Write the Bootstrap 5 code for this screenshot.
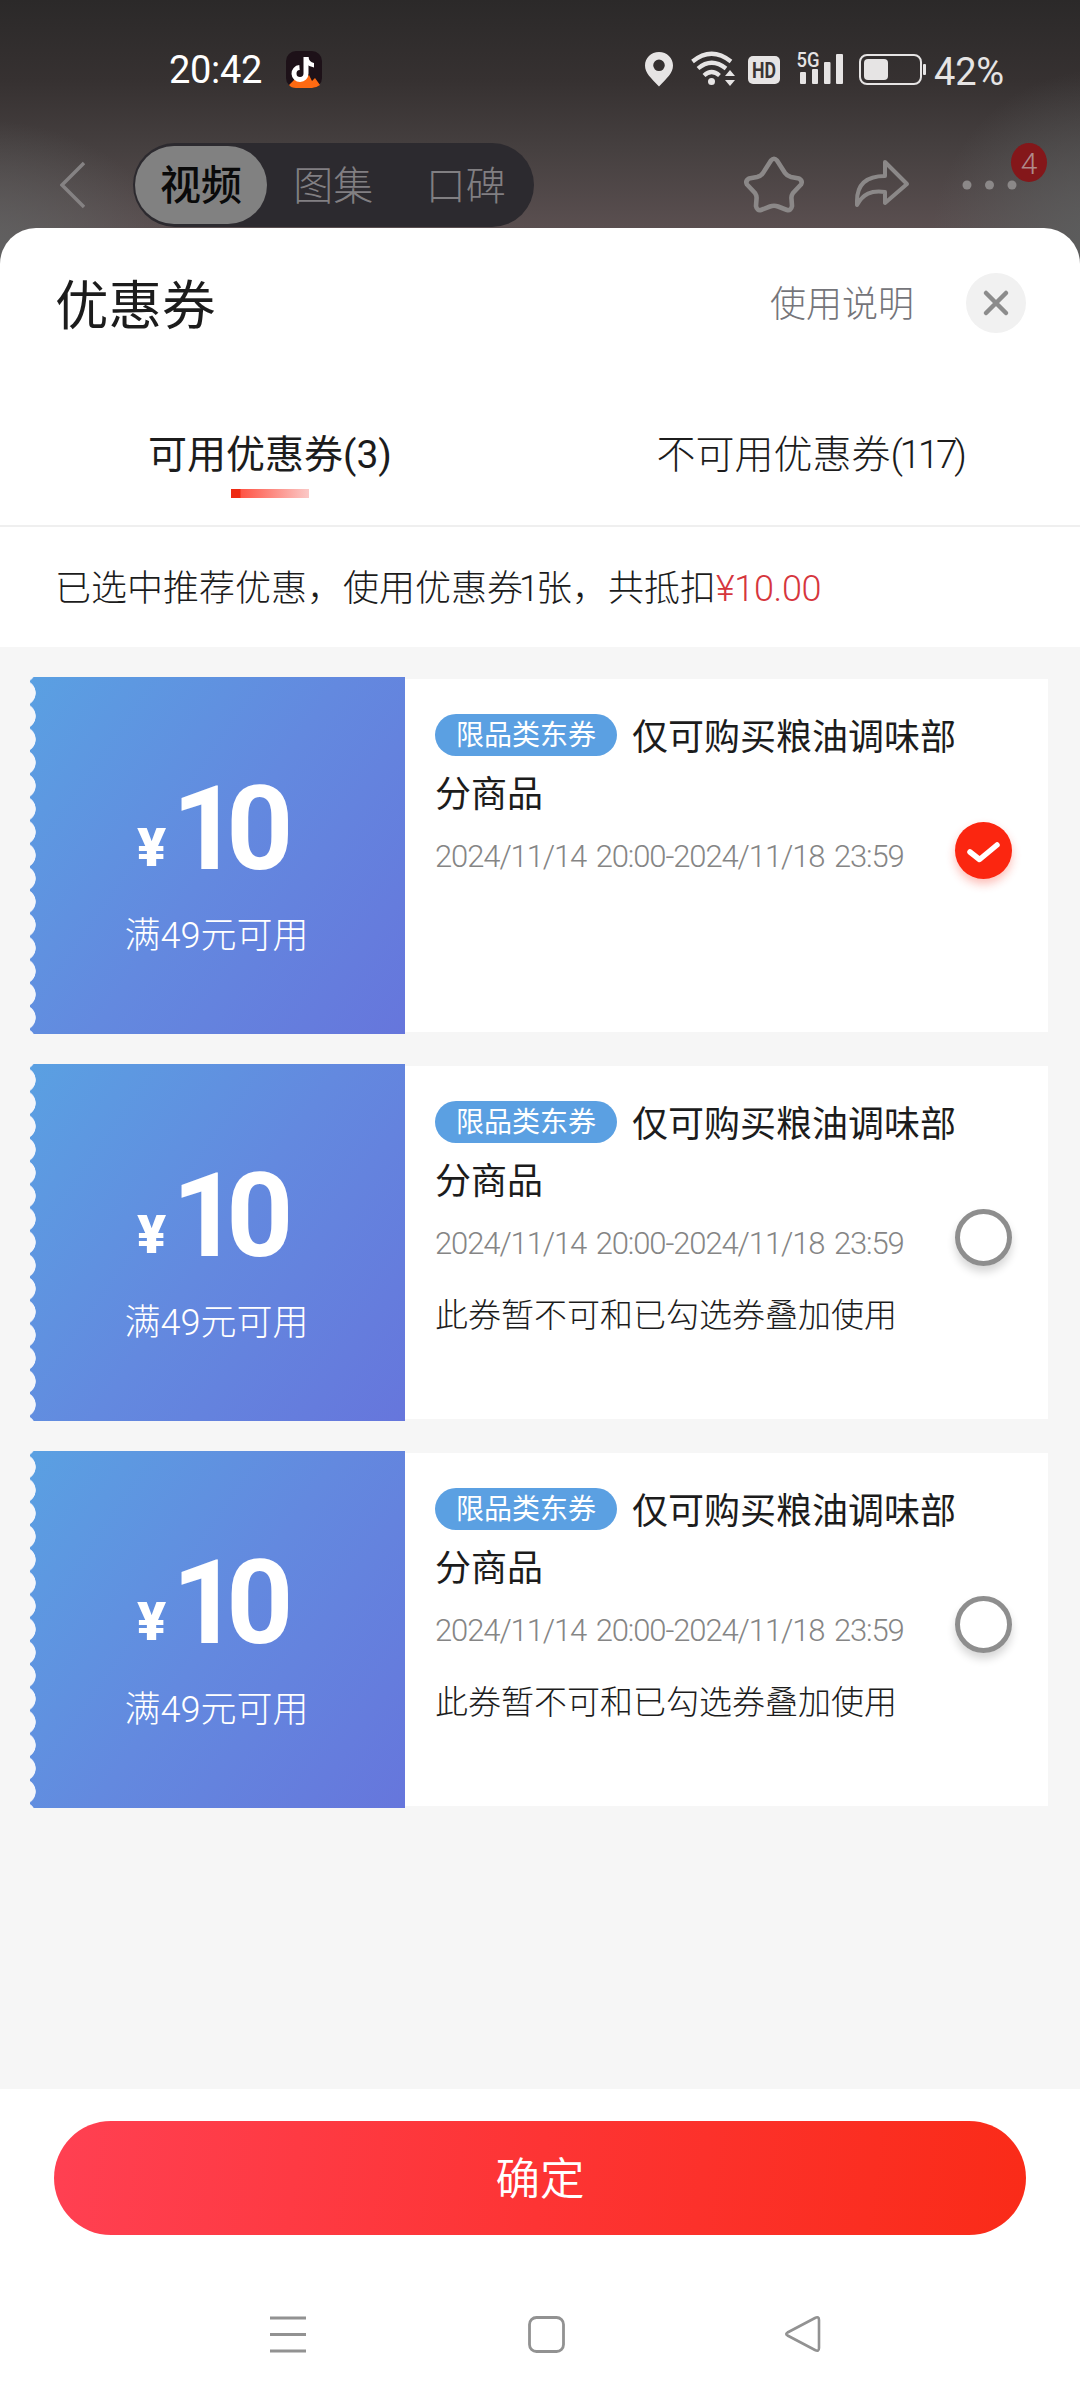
<!DOCTYPE html>
<html lang="zh-CN">
<head>
<meta charset="utf-8">
<meta name="viewport" content="width=device-width, initial-scale=1">
<title>优惠券</title>
<link rel="stylesheet" href="https://cdn.jsdelivr.net/npm/bootstrap@5.3.0/dist/css/bootstrap.min.css">
<style>
body{width:1080px;height:2400px;overflow:hidden;font-family:Roboto,"Noto Sans CJK SC",sans-serif;font-weight:300;color:#1c1c1c;
 background:radial-gradient(ellipse 200px 150px at -20px 270px,#626464,transparent),radial-gradient(ellipse 170px 180px at 1100px 250px,#5c5e5e,transparent),linear-gradient(#2b2929 0,#363131 80px,#464040 150px,#5a4f50 228px);}
svg{display:block;flex:none}
.statusbar{height:137px;color:#fff}
.status-left{padding:49px 0 0 169px;gap:24px}
.status-right{padding:46px 74px 0 0;color:#e6e4e4}
.clock{font-size:38px;line-height:42px;font-weight:400;width:93px;letter-spacing:-.3px}
.pct{font-size:38px;line-height:44px;font-weight:400;letter-spacing:-.2px;margin-left:7px;margin-top:4px;width:72px}
.topbar{height:91px;padding:6px 30px 0 60px;color:#8a8787}
.segment{width:401px;height:84px;background:#2c2a2f;font-size:40px;margin-left:48px;padding:3px 2px}
.segment div{line-height:81px;height:78px;text-align:center;color:#817f82}
.segment .on{width:132px;background:#818181;color:#0a0a0a;font-size:41px;font-weight:500}
.sheet{height:2172px;border-radius:36px 36px 0 0;background:#fff;overflow:hidden}
.sheet-head{height:149px;padding:0 54px 0 55px}
.sheet-title{font-size:53.500px;line-height:80px;font-weight:400;padding-top:9px}
.help{font-size:36px;color:#75757a;margin-right:52px;padding-top:5px}
.close-btn{width:60px;height:60px;background:#f1f1f1;border-radius:50%}
.tabs{height:150px;border-bottom:2px solid #efefef;font-size:39px}
.tab-item{padding-top:50px;line-height:57px}
.tab-item.on{font-weight:400}
.tight{letter-spacing:-3.400px}
.bar{width:78px;height:9px;margin:5px auto 0;background:linear-gradient(90deg,#ee2a12 9px,#ff5546 10px,#fbc9c7)}
.summary{height:120px;font-size:36px;line-height:125px;padding-left:55px}
.slim{letter-spacing:-3px;margin-left:-4px}
.red{color:#d6363d;letter-spacing:-.3px}
.list{height:1442px;background:#f6f6f6;padding:30px 32px 0 30px}
.coupon{height:357px;margin-bottom:30px}
.face{width:375px;height:357px;color:#fff;background:radial-gradient(circle 13px at -7px 11.6px,#f5f6fa 12.4px,transparent 13px) 0 4.4px/20px 23.2px repeat-y,linear-gradient(125deg,#5aa0e2,#6389df 50%,#6676dc)}
.amount{padding-top:3px;margin-top:99px;height:102px;padding-left:107px;font-weight:700}
.yen{font-size:54px;line-height:60px;width:35px;font-weight:900}
.one{font-size:117px;line-height:97px;letter-spacing:-13px;font-weight:700}
.need{font-size:36px;line-height:54px;text-align:center;margin-top:31px;padding-right:2px}
.info{margin:2px 0;background:#fff;padding:30px 36px 0 30px}
.txt{width:480px}
.desc{font-size:36px;line-height:57px;font-weight:400;white-space:nowrap;padding-top:1px}
.tagpill{display:inline-block;height:42px;line-height:44px;width:182px;text-align:center;border-radius:21px;background:#5ba0e2;color:#fff;font-size:28px;vertical-align:5px;margin-right:15px}
.date{font-size:31px;line-height:40px;color:#858585;margin-top:13px;white-space:nowrap;letter-spacing:-1.1px;word-spacing:3px}
.note{font-size:33px;line-height:50px;margin-top:27px;white-space:nowrap}
.pick{width:57px;height:57px;border-radius:50%;margin-top:113px}
.pick.yes{background:#fb2610;box-shadow:0 5px 10px rgba(250,40,20,.3)}
.pick.no{border:5px solid #8e8e8e;box-shadow:0 6px 9px rgba(0,0,0,.16)}
.foot{padding:32px 54px 0}
.ok{height:114px;line-height:119px;font-size:44.500px;color:#fff;background:linear-gradient(97deg,#ff4052,#fd3434 50%,#fa2b18);border:0;padding:0;font-weight:350;width:972px}
.ok:hover{color:#fff}
.sysnav{padding:80px 258px 0 269px}
</style>
</head>
<body>
<header class="statusbar d-flex justify-content-between align-items-start">
 <div class="status-left d-flex align-items-start">
  <div class="clock">20:42</div>
  <svg width="36" height="37" viewBox="0 0 36 37" style="margin-top:2px"><rect width="36" height="37" rx="10" fill="#1d1118"/><path d="M3 34L10 27L16 30L23 24L26 30L29 27L34 34Q30 37 26 37H10Q5 37 3 34Z" fill="#ff6a12"/><path d="M20 6V22.500A6 6 0 1 1 13.500 16.500" fill="none" stroke="#fff" stroke-width="5"/><path d="M18 6H22.300Q23 11 28 12V16.500Q24 16 20 13Z" fill="#fff"/></svg>
 </div>
 <div class="status-right d-flex align-items-start">
  <svg width="284" height="42" viewBox="0 -4 284 42" fill="#e6e4e4">
   <path fill-rule="evenodd" d="M16 2C8 2 2 8 2 15.500C2 23 8 28 16 36.500C24 28 30 23 30 15.500C30 8 24 2 16 2ZM16 9.500A5.800 5.800 0 1 1 16 21.100A5.800 5.800 0 1 1 16 9.500Z"/>
   <g fill="none" stroke="#e6e4e4" stroke-width="4.200"><path d="M49.500 11.500Q68.500 -4 88 11.500"/><path d="M55 18.500Q68.500 7 83 18.500"/><path d="M61 25.500Q68.500 18.500 76.500 25.500"/></g>
   <circle cx="68.500" cy="31.500" r="3.500"/><path d="M82 26L87 20L92 26ZM82 30H92L87 36Z"/>
   <rect x="105" y="6" width="32" height="28" rx="5"/><text x="109" y="28" font-family="Roboto" font-size="22" font-weight="700" textLength="24" lengthAdjust="spacingAndGlyphs" fill="#393433">HD</text>
   <text x="153.500" y="17" font-family="Roboto" font-size="20" font-weight="500" textLength="23" lengthAdjust="spacingAndGlyphs">5G</text>
   <rect x="157" y="22" width="6" height="12" rx="1"/><rect x="169" y="19" width="6" height="15" rx="1"/><rect x="181" y="12" width="6.500" height="22" rx="1"/><rect x="193" y="4" width="7" height="30" rx="1"/>
   <rect x="217" y="5" width="61" height="29" rx="7" fill="none" stroke="#e6e4e4" stroke-width="2"/><rect x="221" y="9" width="24" height="21" rx="4"/><rect x="280" y="14" width="3" height="11" rx="1"/>
  </svg>
  <div class="pct">42%</div>
 </div>
</header>
<nav class="topbar d-flex align-items-start justify-content-between">
 <div class="d-flex align-items-start">
  <svg width="25" height="84" viewBox="0 0 25 84" fill="none" stroke="#858283" stroke-width="3.500"><path d="M24 20L2 42L24 64"/></svg>
  <div class="segment rounded-pill d-flex"><div class="on rounded-pill">视频</div><div class="flex-fill">图集</div><div class="flex-fill">口碑</div></div>
 </div>
 <svg width="310" height="84" viewBox="740 143 310 84" fill="none" stroke="#8b8888" stroke-width="4.600" stroke-linejoin="round"><path d="M771 160.500Q774 157 777 160.500L785 173Q787 176 791 177L799 178.500Q803 181 801 184.500L793 193Q791 196 791.500 199L792 206Q791 211 787 210L778 206.500Q774 205 770 206.500L761 210Q757 211 756 206L756.500 199Q757 196 755 193L747 184.500Q745 181 749 178.500L757 177Q761 176 763 173Z"/><path d="M857 205V201C857 184 867 176 885 176V162L907 184L885 203V192C871 190 863 194 857 205Z" stroke-width="4"/><g fill="#8b8888" stroke="none"><circle cx="967" cy="185" r="4.500"/><circle cx="989.500" cy="185" r="4.500"/><circle cx="1012" cy="185" r="4.500"/></g><ellipse cx="1029" cy="162.500" rx="18" ry="19.500" fill="#84171a" stroke="none"/><text x="1029" y="174" font-family="Roboto" font-size="30" font-weight="300" text-anchor="middle" fill="#b08a8a" stroke="none">4</text></svg>
</nav>
<main class="sheet">
 <div class="sheet-head d-flex align-items-center justify-content-between"><div class="sheet-title">优惠券</div>
  <div class="d-flex align-items-center"><span class="help">使用说明</span><div class="close-btn d-flex align-items-center justify-content-center"><svg width="28" height="28" viewBox="0 0 28 28" stroke="#8c8c8c" stroke-width="4.500" stroke-linecap="round"><path d="M4 4L24 24M24 4L4 24"/></svg></div></div>
 </div>
 <div class="tabs row g-0 text-center"><div class="col-6 tab-item on">可用优惠券(3)<div class="bar"></div></div><div class="col-6 tab-item">不可用优惠券<span class="tight">(117)</span></div></div>
 <div class="summary">已选中推荐优惠，使用优惠券<span class="slim">1</span>张，共抵扣<span class="red">¥10.00</span></div>
 <section class="list">
  <article class="coupon d-flex"><div class="face"><div class="amount d-flex align-items-end"><span class="yen">¥</span><span class="one">10</span></div><div class="need">满49元可用</div></div>
   <div class="info flex-fill d-flex justify-content-between"><div class="txt"><div class="desc"><span class="tagpill">限品类东券</span>仅可购买粮油调味部<br>分商品</div><div class="date">2024/11/14 20:00-2024/11/18 23:59</div></div><div class="pick yes"><svg width="57" height="57" viewBox="0 0 57 57" fill="none" stroke="#fff" stroke-width="5.500" stroke-linecap="round" stroke-linejoin="round"><path d="M15 30L24.500 37.500L42 23"/></svg></div></div></article>
  <article class="coupon d-flex"><div class="face"><div class="amount d-flex align-items-end"><span class="yen">¥</span><span class="one">10</span></div><div class="need">满49元可用</div></div>
   <div class="info flex-fill d-flex justify-content-between"><div class="txt"><div class="desc"><span class="tagpill">限品类东券</span>仅可购买粮油调味部<br>分商品</div><div class="date">2024/11/14 20:00-2024/11/18 23:59</div><div class="note">此券暂不可和已勾选券叠加使用</div></div><div class="pick no"></div></div></article>
  <article class="coupon d-flex"><div class="face"><div class="amount d-flex align-items-end"><span class="yen">¥</span><span class="one">10</span></div><div class="need">满49元可用</div></div>
   <div class="info flex-fill d-flex justify-content-between"><div class="txt"><div class="desc"><span class="tagpill">限品类东券</span>仅可购买粮油调味部<br>分商品</div><div class="date">2024/11/14 20:00-2024/11/18 23:59</div><div class="note">此券暂不可和已勾选券叠加使用</div></div><div class="pick no"></div></div></article>
 </section>
 <footer class="foot"><button class="btn ok rounded-pill">确定</button></footer>
 <div class="sysnav d-flex justify-content-between">
  <svg width="38" height="38" viewBox="0 0 38 38" stroke="#929292" stroke-width="3"><path d="M1 3H37M1 19.500H37M1 36H37"/></svg>
  <svg width="38" height="38" viewBox="0 0 38 38" fill="none" stroke="#929292" stroke-width="2.800"><rect x="2.500" y="2.500" width="34" height="34" rx="7"/></svg>
  <svg width="38" height="38" viewBox="0 0 38 38" fill="none" stroke="#929292" stroke-width="2.600" stroke-linejoin="round"><path d="M3.500 17.500L31 3Q35 1 35 5V33Q35 37 31 35L3.500 20.500Q1 19 3.500 17.500Z"/></svg>
 </div>
</main>
<script src="https://cdn.jsdelivr.net/npm/bootstrap@5.3.0/dist/js/bootstrap.bundle.min.js"></script>
</body>
</html>
